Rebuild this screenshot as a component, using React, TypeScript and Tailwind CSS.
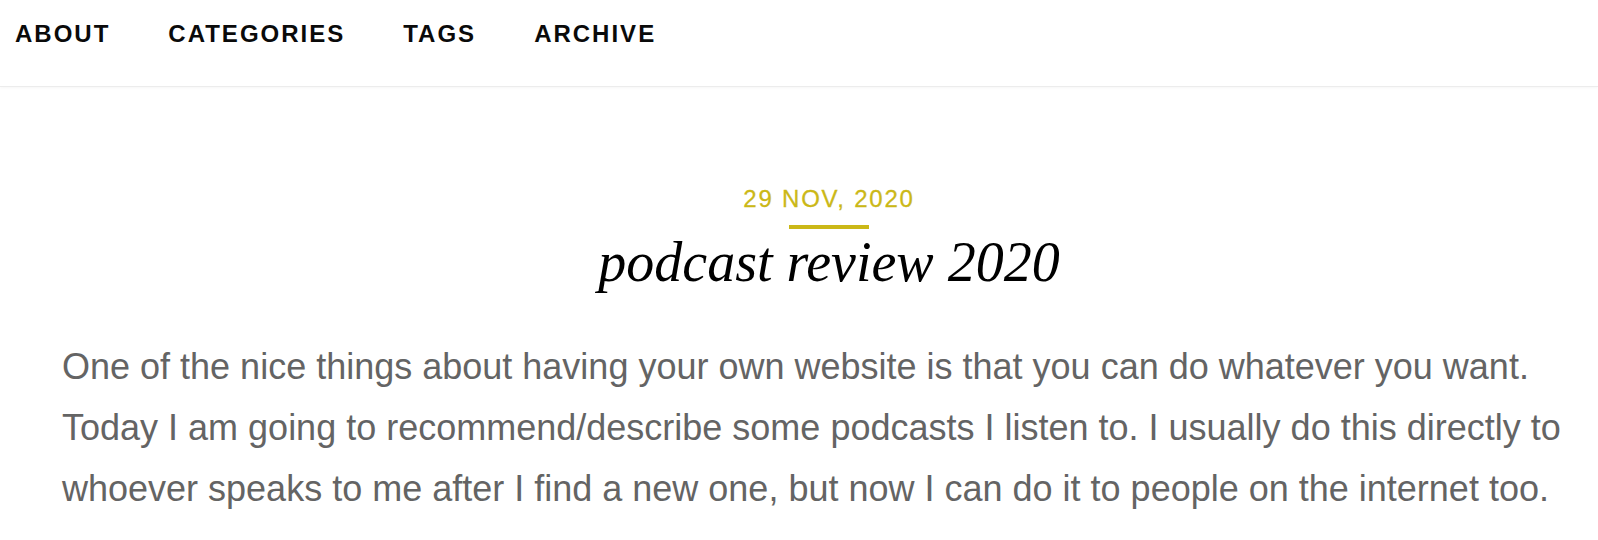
import React from "react";

export default function App() {
  const sans = { fontFamily: '"Liberation Sans", Arial, sans-serif' };
  return (
    <div className="min-h-[540px] w-full bg-white text-black" style={sans}>
      <header className="h-[87px] border-b border-[#ececec] shadow-[0_1px_3px_rgba(0,0,0,0.04)]">
        <nav className="flex items-start gap-[58px] pl-[15px] pt-[22px] text-[24px] font-bold leading-[24px] tracking-[2px] text-[#0a0a0a] font-['Liberation_Sans',Arial,sans-serif]">
          <a>ABOUT</a>
          <a>CATEGORIES</a>
          <a>TAGS</a>
          <a>ARCHIVE</a>
        </nav>
      </header>
      <main className="ml-[62px] w-[1534px] pt-[100px]">
        <div className="flex flex-col items-center">
          <div className="text-[24px] leading-[24px] tracking-[1.8px] text-[#cbb817] font-['Liberation_Sans',Arial,sans-serif] [-webkit-text-stroke:0.3px_#cbb817]">
            29 NOV, 2020
          </div>
          <div className="mt-[14px] h-[4px] w-[80px] bg-[#cbb817]" />
          <h1 className="mt-[2px] text-[56px] italic font-normal leading-[62px] text-black font-['Liberation_Serif','Times_New_Roman',serif]">
            podcast review 2020
          </h1>
        </div>
        <p className="mt-[43px] text-[36px] leading-[61px] text-[#646464] font-['Liberation_Sans',Arial,sans-serif]">
          <span className="block whitespace-nowrap">
            One of the nice things about having your own website is that you can do whatever you want.
          </span>
          <span className="block whitespace-nowrap">
            Today I am going to recommend/describe some podcasts I listen to. I usually do this directly to
          </span>
          <span className="block whitespace-nowrap">
            whoever speaks to me after I find a new one, but now I can do it to people on the internet too.
          </span>
        </p>
      </main>
    </div>
  );
}
